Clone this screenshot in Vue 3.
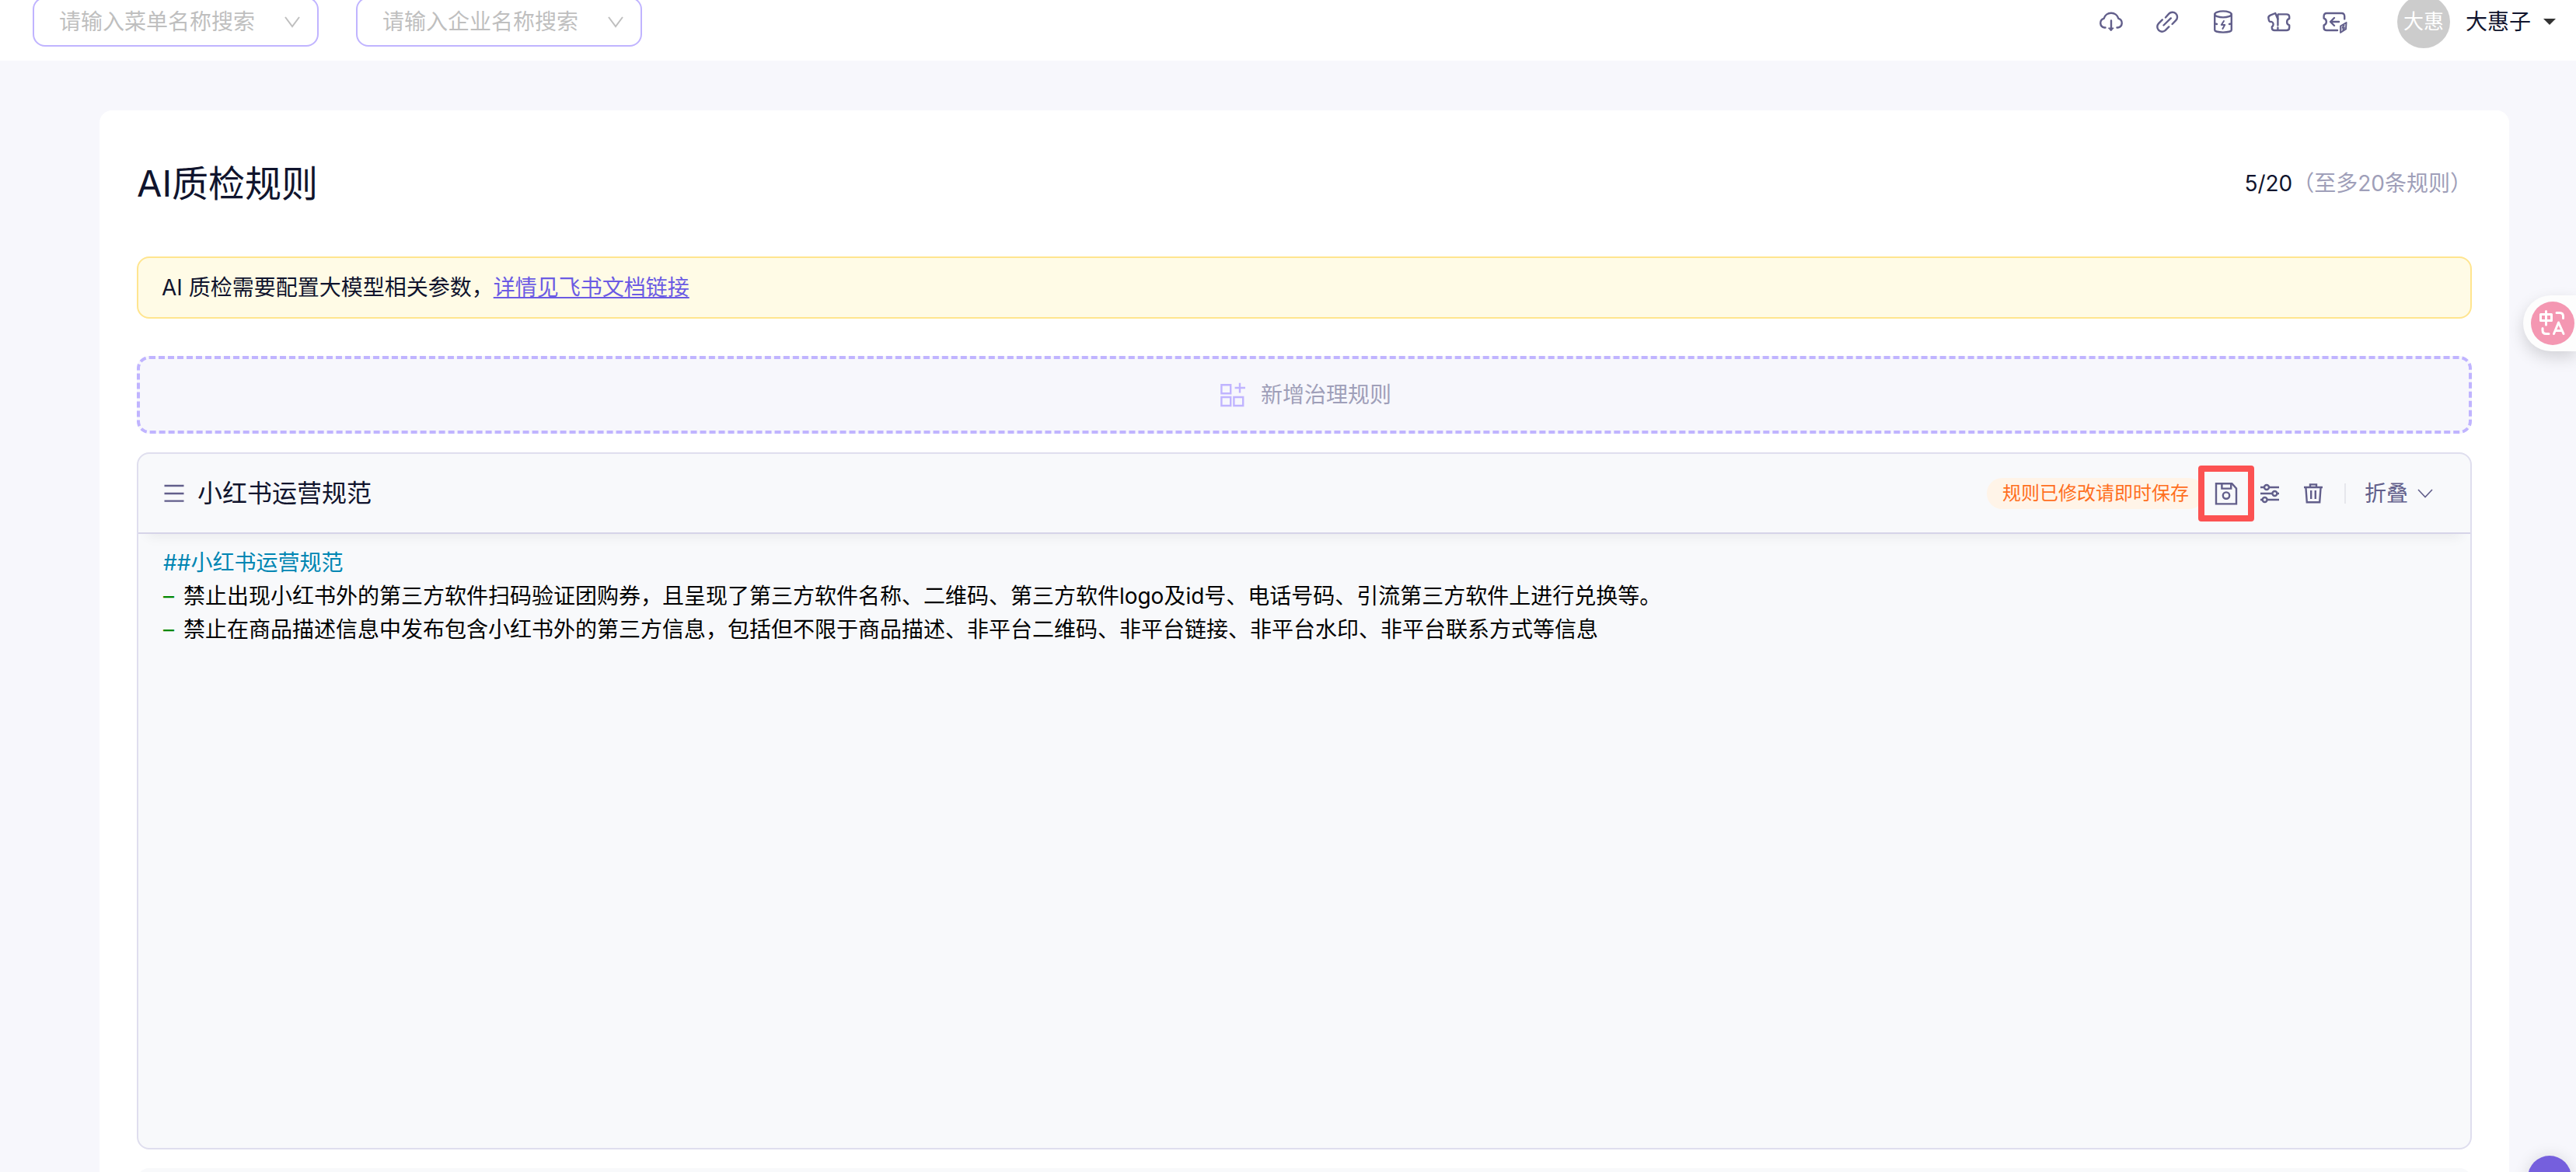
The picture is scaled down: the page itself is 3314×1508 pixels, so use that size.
<script setup>
import { ref } from 'vue'

const menu = ref('')
const company = ref('')

const rules = [
  '禁止出现小红书外的第三方软件扫码验证团购券，且呈现了第三方软件名称、二维码、第三方软件logo及id号、电话号码、引流第三方软件上进行兑换等。',
  '禁止在商品描述信息中发布包含小红书外的第三方信息，包括但不限于商品描述、非平台二维码、非平台链接、非平台水印、非平台联系方式等信息'
]
</script>

<template>
  <div class="page">
    <header class="topbar">
      <div class="filters">
        <div class="picker">
          <select v-model="menu" aria-label="菜单名称">
            <option value="">请输入菜单名称搜索</option>
          </select>
          <svg class="picker-arrow" viewBox="0 0 24 24" fill="none" stroke="currentColor" stroke-width="2"><path d="M3 6l9 12 9-12" /></svg>
        </div>
        <div class="picker">
          <select v-model="company" aria-label="企业名称">
            <option value="">请输入企业名称搜索</option>
          </select>
          <svg class="picker-arrow" viewBox="0 0 24 24" fill="none" stroke="currentColor" stroke-width="2"><path d="M3 6l9 12 9-12" /></svg>
        </div>
      </div>

      <nav class="tools">
        <button class="icon-btn" aria-label="下载">
          <svg viewBox="0 0 32 32" fill="none" stroke="currentColor" stroke-width="2.4" stroke-linecap="round" stroke-linejoin="round">
            <path d="M8.5 23.5H7.3A6 6 0 0 1 6.6 11.8A9.8 9.8 0 0 1 25.4 11.8A6 6 0 0 1 24.7 23.5H23.5M16 14.5V26" />
            <path d="M12.8 24h6.4L16 27.6z" fill="currentColor" stroke-width="1" />
          </svg>
        </button>
        <button class="icon-btn" aria-label="链接">
          <svg viewBox="0 0 32 32" fill="none" stroke="currentColor" stroke-width="2.4" stroke-linecap="round">
            <path d="M14 10.5L18.3 5.6A6.2 6.2 0 0 1 27.3 14.2L22.6 19M9.8 13.4L4.9 18.4A6.2 6.2 0 0 0 13.6 27.2L18.3 22.4M11.5 20.5L20.8 11.4" />
          </svg>
        </button>
        <button class="icon-btn" aria-label="数据">
          <svg viewBox="0 0 32 32" fill="none" stroke="currentColor" stroke-width="2.4" stroke-linecap="round" stroke-linejoin="round">
            <ellipse cx="16" cy="6.4" rx="10.8" ry="4" />
            <path d="M5.2 6.4V26.4C5.2 28.4 10 29.6 16 29.6S26.8 28.4 26.8 26.4V6.4M5.2 18.4L8 19M26.8 18.4L24 19" />
            <path d="M17 15L13.8 20H18.2L15.4 25" stroke-width="2" />
          </svg>
        </button>
        <button class="icon-btn" aria-label="优惠券">
          <svg viewBox="0 0 32 32" fill="none" stroke="currentColor" stroke-width="2.4" stroke-linecap="round" stroke-linejoin="round">
            <path d="M15 6.4H25.5Q29.2 6.4 29.2 9.5V12A4.4 4.4 0 0 0 29.2 20.4V23.5Q29.2 27 25.5 27H10Q6.8 27 6.8 23.5V22.5C9.5 20.5 9 17 6.5 16C3.5 16.6 2.6 14.5 2.6 12.2C1.8 10 2.6 8.6 4.8 7.6L11.2 5L14.4 12.5" />
            <path d="M14.4 7V20.5M14.4 23.4V26" />
          </svg>
        </button>
        <button class="icon-btn" aria-label="兑换">
          <svg viewBox="0 0 32 32" fill="none" stroke="currentColor" stroke-width="2.4" stroke-linecap="round" stroke-linejoin="round">
            <path d="M28.2 12.4V9Q28.2 5 24.5 5H5.2Q1.6 5 1.6 9V11.6A4.6 4.6 0 0 1 1.6 20.4V23.4Q1.6 27 5.2 27H19" />
            <path d="M21 16H10.4M15 11L10 16L15 21" />
            <path d="M30.6 17L23 21.6V30L30 25.6zM27.2 20.5L25.6 23.8H28L26.4 27" fill="currentColor" fill-opacity=".35" stroke-width="1.8" />
          </svg>
        </button>
      </nav>

      <button class="account">
        <span class="avatar">大惠</span>
        <span>大惠子</span>
        <svg class="caret" viewBox="0 0 16 8" fill="#333"><path d="M0 0H16L8 8z" /></svg>
      </button>
    </header>

    <main class="panel">
      <div class="panel-head">
        <h1>AI质检规则</h1>
        <p class="quota">5/20<span>（至多20条规则）</span></p>
      </div>

      <p class="notice">AI 质检需要配置大模型相关参数，<a href="#">详情见飞书文档链接</a></p>

      <button class="add">
        <svg viewBox="0 0 32 32" fill="none" stroke="currentColor" stroke-width="2.4">
          <path d="M1.4 3.2H13.2V14.2H1.4zM1.4 19H13.2V30H1.4zM17.4 19H29.2V30H17.4zM25 .8V13.6M18.6 7H32" />
        </svg>
        <span>新增治理规则</span>
      </button>

      <section class="rule">
        <div class="rule-head">
          <svg class="drag" viewBox="0 0 28 28" fill="none" stroke="currentColor" stroke-width="2.4"><path d="M1.5 4H26.5M1.5 14H26.5M1.5 23.6H26.5" /></svg>
          <h2>小红书运营规范</h2>
          <span class="unsaved">规则已修改请即时保存</span>
          <div class="actions">
            <button class="icon-btn save" aria-label="保存">
              <svg viewBox="0 0 32 32" fill="none" stroke="currentColor" stroke-width="2.4">
                <path d="M3 3.2H23.4L29 9.4V29.4H3zM10.4 3.2V9.6H22.2V3.2" />
                <circle cx="16" cy="18.6" r="4.2" />
              </svg>
            </button>
            <button class="icon-btn" aria-label="设置">
              <svg viewBox="0 0 32 32" fill="none" stroke="currentColor" stroke-width="2.4">
                <path d="M4 8H9M15 8H28M4 16H19.4M25.4 16H28M4 24H6.6M12.6 24H28" />
                <circle cx="12" cy="8" r="3" /><circle cx="22.4" cy="16" r="3" /><circle cx="9.6" cy="24" r="3" />
              </svg>
            </button>
            <button class="icon-btn" aria-label="删除">
              <svg viewBox="0 0 32 32" fill="none" stroke="currentColor" stroke-width="2.4">
                <path d="M4 8H28M12 8V4.4H20V8M6.4 8L7.8 27.2H24.2L25.6 8M13.2 12V23M18.8 12V23" />
              </svg>
            </button>
          </div>
          <span class="divider"></span>
          <button class="fold">
            <span>折叠</span>
            <svg viewBox="0 0 20 20" fill="none" stroke="currentColor" stroke-width="1.6"><path d="M1 5L10 14.5L19 5" /></svg>
          </button>
        </div>
        <div class="editor" role="textbox" aria-multiline="true" aria-label="规则内容">
          <div class="heading">##小红书运营规范</div>
          <div v-for="rule in rules" :key="rule"><span class="bullet">–</span> {{ rule }}</div>
        </div>
      </section>

      <section class="rule-next"></section>
    </main>

    <button class="translate" aria-label="翻译">
      <svg viewBox="0 0 56 56" fill="none" stroke="#fff" stroke-width="3" stroke-linecap="round" stroke-linejoin="round">
        <circle cx="28" cy="28" r="28" fill="#f497b2" stroke="none" />
        <path d="M12.5 16.5H26.5V24.5H12.5zM19.5 12.5V30M33 14.5H37Q41.5 14.5 41.5 19V21.5M15 34.5V37Q15 41.5 19.5 41.5H23M29.5 41.5L35.5 27L42 41.5M32 37.5H39.5" />
      </svg>
    </button>
    <button class="assistant" aria-label="助手"></button>
  </div>
</template>

<style>
body {
  background: #f7f7fc;
}
</style>

<style scoped>
.page {
  height: 100vh;
  overflow: hidden;
  position: relative;
  background: #f7f7fc;
  color: #10142d;
  font-family: Inter, "Noto Sans CJK SC", sans-serif;
  font-size: 28px;
  line-height: 42px;
}

h1, h2, p {
  margin: 0;
  font-weight: 400;
}

button {
  margin: 0;
  padding: 0;
  border: 0;
  background: none;
  color: inherit;
  font: inherit;
  cursor: pointer;
}

svg {
  display: block;
  flex: none;
}

.topbar {
  display: flex;
  align-items: center;
  height: 100px;
  margin-top: -22px;
  padding: 0 26px 0 42px;
  background: #fff;
}

.filters {
  display: flex;
  gap: 48px;
}

.picker {
  position: relative;
  width: 368px;
}

.picker select {
  display: block;
  box-sizing: border-box;
  width: 100%;
  height: 64px;
  padding: 0 32px;
  border: 2px solid #c0b4ff;
  border-radius: 16px;
  background: #fff;
  color: #bfbfbf;
  font: inherit;
  appearance: none;
}

.picker-arrow {
  position: absolute;
  top: 20px;
  right: 22px;
  width: 24px;
  height: 24px;
  color: #bfbfbf;
  pointer-events: none;
}

.tools {
  display: flex;
  gap: 40px;
  margin-left: auto;
  color: #625f8b;
}

.icon-btn svg,
.add svg {
  width: 32px;
  height: 32px;
}

.account {
  display: flex;
  align-items: center;
  margin-left: 64px;
}

.avatar {
  width: 68px;
  margin-right: 20px;
  border-radius: 50%;
  background: #ccc;
  color: #fff;
  font-size: 26px;
  line-height: 68px;
  text-align: center;
}

.caret {
  width: 16px;
  height: 8px;
  margin-left: 16px;
}

.panel {
  margin: 64px 86px 0 128px;
  padding: 58px 48px 48px;
  border-radius: 16px;
  background: #fff;
}

.panel-head {
  display: flex;
  align-items: center;
  justify-content: space-between;
}

h1 {
  font-size: 47px;
  line-height: 72px;
}

.quota span {
  color: #9f9fb9;
}

.notice {
  margin-top: 58px;
  padding: 17px 30px;
  border: 2px solid #ffe58f;
  border-radius: 16px;
  background: #fffbe6;
}

.notice a {
  color: #6b5be3;
  text-decoration: underline;
}

.add {
  display: flex;
  align-items: center;
  justify-content: center;
  gap: 20px;
  box-sizing: border-box;
  width: 100%;
  height: 100px;
  margin-top: 48px;
  padding-left: 4px;
  border: 4px dashed #c0b4ff;
  border-radius: 16px;
  background: #f7f7fc;
  color: #9f9fb9;
}

.add svg {
  color: #c0b4ff;
}

.rule {
  margin-top: 24px;
  border: 2px solid #dfdeee;
  border-radius: 16px;
  background: #f8f9fb;
}

.rule-head {
  display: flex;
  align-items: center;
  height: 101px;
  padding: 0 48px 0 32px;
  border-bottom: 2px solid #d6d4e8;
  border-radius: 14px 14px 0 0;
  box-shadow: 0 16px 16px -12px rgba(0, 0, 0, 0.06);
  color: #625f8b;
}

.drag {
  width: 28px;
  height: 28px;
  margin-right: 16px;
}

h2 {
  color: #10142d;
  font-size: 32px;
  line-height: 48px;
}

.unsaved {
  margin-left: auto;
  padding: 0 20px;
  border-radius: 20px;
  background: #fff4e8;
  color: #ff6f1e;
  font-size: 24px;
  line-height: 40px;
}

.actions {
  display: flex;
  gap: 24px;
  margin-left: 12px;
}

.save {
  position: relative;
}

.save::after {
  content: "";
  position: absolute;
  inset: -20px;
  border: 8px solid #fc5252;
  border-radius: 4px;
}

.divider {
  width: 2px;
  height: 26px;
  margin: 0 24px;
  background: #e6e7ec;
}

.fold {
  display: flex;
  align-items: center;
  gap: 12px;
}

.fold svg {
  width: 20px;
  height: 20px;
}

.editor {
  box-sizing: border-box;
  min-height: 790px;
  padding: 16px 32px;
  color: #000;
  line-height: 43px;
}

.heading {
  color: #0086b3;
}

.bullet {
  margin-right: 4px;
  color: #008800;
}

.rule-next {
  height: 100px;
  margin-top: 24px;
  border-radius: 16px;
  background: #f8f9fb;
}

.translate {
  position: fixed;
  top: 380px;
  right: 0;
  padding: 8px 2px 8px 10px;
  border-radius: 36px 0 0 36px;
  background: #fdfdfd;
  box-shadow: 0 8px 20px rgba(0, 0, 0, 0.15);
}

.translate svg {
  width: 56px;
  height: 56px;
}

.assistant {
  position: fixed;
  right: 6px;
  bottom: -35px;
  width: 56px;
  height: 56px;
  border-radius: 50%;
  background: #755fdd;
  box-shadow: 0 0 20px rgba(0, 0, 0, 0.12);
}
</style>
